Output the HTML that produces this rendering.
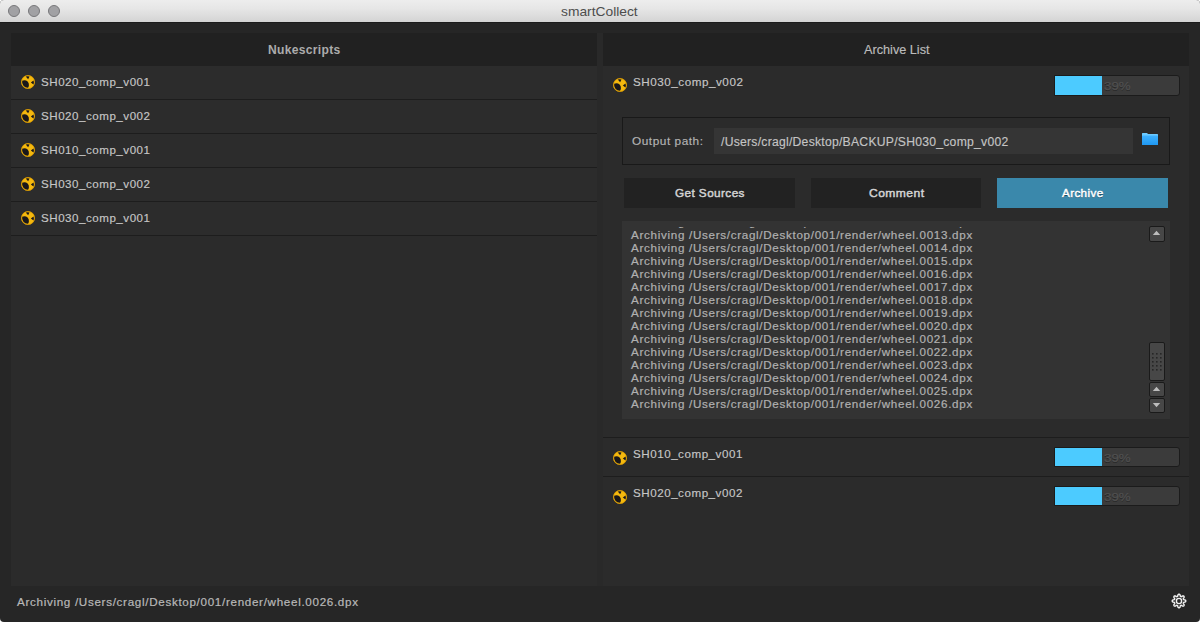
<!DOCTYPE html>
<html><head><meta charset="utf-8">
<style>
*{box-sizing:border-box;margin:0;padding:0}
html,body{width:1200px;height:622px;overflow:hidden;background:#ffffff;font-family:"Liberation Sans",sans-serif}
#win{position:absolute;left:0;top:0;width:1200px;height:622px;background:#262626;border-radius:4px;overflow:hidden}
#title{position:absolute;left:0;top:0;width:1200px;height:23px;background:linear-gradient(#ededed,#e6e6e6 40%,#d4d4d4);border-bottom:1px solid #1c1c1c}
.dot{position:absolute;top:5px;width:12px;height:12px;border-radius:50%;background:#a1a1a4;border:1px solid #77777a}
.tx{position:absolute;white-space:pre;transform-origin:0 0;-webkit-text-stroke-width:0.15px}
.blk{position:absolute}
.nk{position:absolute}
.pb{position:absolute;width:126px;height:20px;background:#3b3b3b;border:1px solid #1b1b1b;border-radius:0 3px 3px 0}
.pf{position:absolute;left:0;top:0;width:47px;height:18px;background:#4ccbff}
.sbtn{position:absolute;left:1149px;width:16px;height:16px;background:#474747;border:1px solid #1a1a1a;border-radius:2px}
</style></head><body>
<div id="win">

<div id="title"><div class="dot" style="left:8px"></div><div class="dot" style="left:28px"></div><div class="dot" style="left:48px"></div></div>
<div class="tx" id="ttl" style="left:561.25px;top:4.80px;font-size:13px;line-height:13px;color:#4d4d4d;transform:scaleX(1.0617);-webkit-text-stroke-width:0;">smartCollect</div>
<div class="blk" style="left:597px;top:33px;width:6px;height:553px;background:#292929"></div>
<div class="blk" style="left:11px;top:33px;width:586px;height:553px;background:#2b2b2b"></div>
<div class="blk" style="left:11px;top:33px;width:586px;height:33px;background:#212121"></div>
<div class="tx" id="nks" style="left:267.80px;top:43.84px;font-size:12px;line-height:12px;color:#acacac;font-weight:bold;-webkit-text-stroke-width:0;transform:scaleX(1.0070);letter-spacing:0.3px;">Nukescripts</div>
<div class="blk" style="left:11px;top:66px;width:586px;height:34px;background:#2c2c2c;border-bottom:1px solid #1d1d1d"></div>
<svg class="nk" style="left:20px;top:74.2px" width="16" height="16" viewBox="0 0 16 16"><circle cx="8" cy="8" r="6.6" fill="#f4b80e" stroke="#dc9c00" stroke-width="0.8"/><path d="M2.2 6.8 A5.75 5.75 0 0 0 8.1 13.8 Q9.3 12.0 8.8 9.7 Q8.3 7.4 6.1 6.6 Q4.0 6.0 2.2 6.8 Z" fill="#19171a"/><path d="M5.8 2.6 Q7.6 1.9 9.5 2.6 L8.1 5.2 Z" fill="#19171a"/><path d="M13.5 6.6 Q14.3 8.5 13.5 10.4 L10.8 8.5 Z" fill="#19171a"/></svg>
<div class="tx" id="l0" style="left:41.00px;top:77.39px;font-size:11px;line-height:11px;color:#c6c6c6;transform:scaleX(1.0519);letter-spacing:0.5px;">SH020_comp_v001</div>
<div class="blk" style="left:11px;top:100px;width:586px;height:34px;background:#2c2c2c;border-bottom:1px solid #1d1d1d"></div>
<svg class="nk" style="left:20px;top:108.2px" width="16" height="16" viewBox="0 0 16 16"><circle cx="8" cy="8" r="6.6" fill="#f4b80e" stroke="#dc9c00" stroke-width="0.8"/><path d="M2.2 6.8 A5.75 5.75 0 0 0 8.1 13.8 Q9.3 12.0 8.8 9.7 Q8.3 7.4 6.1 6.6 Q4.0 6.0 2.2 6.8 Z" fill="#19171a"/><path d="M5.8 2.6 Q7.6 1.9 9.5 2.6 L8.1 5.2 Z" fill="#19171a"/><path d="M13.5 6.6 Q14.3 8.5 13.5 10.4 L10.8 8.5 Z" fill="#19171a"/></svg>
<div class="tx" id="l1" style="left:41.00px;top:111.39px;font-size:11px;line-height:11px;color:#c6c6c6;transform:scaleX(1.0519);letter-spacing:0.5px;">SH020_comp_v002</div>
<div class="blk" style="left:11px;top:134px;width:586px;height:34px;background:#2c2c2c;border-bottom:1px solid #1d1d1d"></div>
<svg class="nk" style="left:20px;top:142.2px" width="16" height="16" viewBox="0 0 16 16"><circle cx="8" cy="8" r="6.6" fill="#f4b80e" stroke="#dc9c00" stroke-width="0.8"/><path d="M2.2 6.8 A5.75 5.75 0 0 0 8.1 13.8 Q9.3 12.0 8.8 9.7 Q8.3 7.4 6.1 6.6 Q4.0 6.0 2.2 6.8 Z" fill="#19171a"/><path d="M5.8 2.6 Q7.6 1.9 9.5 2.6 L8.1 5.2 Z" fill="#19171a"/><path d="M13.5 6.6 Q14.3 8.5 13.5 10.4 L10.8 8.5 Z" fill="#19171a"/></svg>
<div class="tx" id="l2" style="left:41.00px;top:145.39px;font-size:11px;line-height:11px;color:#c6c6c6;transform:scaleX(1.0519);letter-spacing:0.5px;">SH010_comp_v001</div>
<div class="blk" style="left:11px;top:168px;width:586px;height:34px;background:#2c2c2c;border-bottom:1px solid #1d1d1d"></div>
<svg class="nk" style="left:20px;top:176.2px" width="16" height="16" viewBox="0 0 16 16"><circle cx="8" cy="8" r="6.6" fill="#f4b80e" stroke="#dc9c00" stroke-width="0.8"/><path d="M2.2 6.8 A5.75 5.75 0 0 0 8.1 13.8 Q9.3 12.0 8.8 9.7 Q8.3 7.4 6.1 6.6 Q4.0 6.0 2.2 6.8 Z" fill="#19171a"/><path d="M5.8 2.6 Q7.6 1.9 9.5 2.6 L8.1 5.2 Z" fill="#19171a"/><path d="M13.5 6.6 Q14.3 8.5 13.5 10.4 L10.8 8.5 Z" fill="#19171a"/></svg>
<div class="tx" id="l3" style="left:41.00px;top:179.39px;font-size:11px;line-height:11px;color:#c6c6c6;transform:scaleX(1.0519);letter-spacing:0.5px;">SH030_comp_v002</div>
<div class="blk" style="left:11px;top:202px;width:586px;height:34px;background:#2c2c2c;border-bottom:1px solid #1d1d1d"></div>
<svg class="nk" style="left:20px;top:210.2px" width="16" height="16" viewBox="0 0 16 16"><circle cx="8" cy="8" r="6.6" fill="#f4b80e" stroke="#dc9c00" stroke-width="0.8"/><path d="M2.2 6.8 A5.75 5.75 0 0 0 8.1 13.8 Q9.3 12.0 8.8 9.7 Q8.3 7.4 6.1 6.6 Q4.0 6.0 2.2 6.8 Z" fill="#19171a"/><path d="M5.8 2.6 Q7.6 1.9 9.5 2.6 L8.1 5.2 Z" fill="#19171a"/><path d="M13.5 6.6 Q14.3 8.5 13.5 10.4 L10.8 8.5 Z" fill="#19171a"/></svg>
<div class="tx" id="l4" style="left:41.00px;top:213.39px;font-size:11px;line-height:11px;color:#c6c6c6;transform:scaleX(1.0519);letter-spacing:0.5px;">SH030_comp_v001</div>
<div class="blk" style="left:603px;top:33px;width:586px;height:553px;background:#2b2b2b"></div>
<div class="blk" style="left:603px;top:33px;width:586px;height:33px;background:#212121"></div>
<div class="tx" id="al" style="left:863.50px;top:43.84px;font-size:12px;line-height:12px;color:#bcbcbc;transform:scaleX(1.0562);">Archive List</div>
<div class="blk" style="left:603px;top:66px;width:586px;height:372px;background:#2b2b2b;border-bottom:1px solid #1d1d1d"></div>
<svg class="nk" style="left:611.9px;top:77.3px" width="16" height="16" viewBox="0 0 16 16"><circle cx="8" cy="8" r="6.6" fill="#f4b80e" stroke="#dc9c00" stroke-width="0.8"/><path d="M2.2 6.8 A5.75 5.75 0 0 0 8.1 13.8 Q9.3 12.0 8.8 9.7 Q8.3 7.4 6.1 6.6 Q4.0 6.0 2.2 6.8 Z" fill="#19171a"/><path d="M5.8 2.6 Q7.6 1.9 9.5 2.6 L8.1 5.2 Z" fill="#19171a"/><path d="M13.5 6.6 Q14.3 8.5 13.5 10.4 L10.8 8.5 Z" fill="#19171a"/></svg>
<div class="tx" id="r0" style="left:632.70px;top:77.19px;font-size:11px;line-height:11px;color:#c6c6c6;transform:scaleX(1.0606);letter-spacing:0.5px;">SH030_comp_v002</div>
<div class="pb" style="left:1054px;top:75px;height:21px"><div class="pf" style="height:19px"></div></div><div class="tx" id="pct75" style="left:1103.70px;top:80.69px;font-size:11px;line-height:11px;color:#505050;transform:scaleX(1.2144);text-shadow:0 1px 0 #262626;-webkit-text-stroke-width:0.25px;">39%</div>
<div class="blk" style="left:622px;top:117px;width:548px;height:48px;border:1px solid #191919;background:#2b2b2b"></div>
<div class="tx" id="op" style="left:632.40px;top:135.89px;font-size:11px;line-height:11px;color:#b4b4b4;transform:scaleX(1.0750);letter-spacing:0.5px;">Output path:</div>
<div class="blk" style="left:714px;top:128px;width:419px;height:26px;background:#353535"></div>
<div class="tx" id="path" style="left:721.30px;top:135.59px;font-size:12px;line-height:12px;color:#c4c4c4;transform:scaleX(1.0138);letter-spacing:0.25px;">/Users/cragl/Desktop/BACKUP/SH030_comp_v002</div>
<svg class="blk" style="left:1141px;top:132px" width="18" height="14" viewBox="0 0 18 14"><defs><linearGradient id="fg" x1="0" y1="0" x2="0" y2="1"><stop offset="0" stop-color="#3fb2ff"/><stop offset="1" stop-color="#1f98f2"/></linearGradient></defs><path d="M1 1.6 Q1 0.9 1.6 0.9 L5.8 0.9 L7.2 2.1 L16.4 2.1 Q17 2.1 17 2.7 L17 4 L1 4 Z" fill="#6ccaff"/><rect x="1" y="3.4" width="16" height="9.7" rx="0.6" fill="url(#fg)"/></svg>
<div class="blk" style="left:624px;top:178px;width:171px;height:30px;background:#222222"></div>
<div class="blk" style="left:811px;top:178px;width:170px;height:30px;background:#222222"></div>
<div class="blk" style="left:997px;top:178px;width:171px;height:30px;background:#3a88ab"></div>
<div class="tx" id="gs" style="left:674.60px;top:187.57px;font-size:11.5px;line-height:11.5px;color:#d4d4d4;transform:scaleX(1.0233);letter-spacing:0.4px;-webkit-text-stroke-width:0.45px;">Get Sources</div>
<div class="tx" id="cm" style="left:869.00px;top:187.77px;font-size:11.5px;line-height:11.5px;color:#d4d4d4;transform:scaleX(1.0526);letter-spacing:0.4px;-webkit-text-stroke-width:0.45px;">Comment</div>
<div class="tx" id="ar" style="left:1062.00px;top:188.17px;font-size:11.5px;line-height:11.5px;color:#ffffff;transform:scaleX(1.0085);letter-spacing:0.4px;-webkit-text-stroke-width:0.45px;text-shadow:0 1px 0 #1d4a60;">Archive</div>
<div class="blk" style="left:622px;top:221px;width:548px;height:198px;background:#333333"></div>
<div class="blk" style="left:622px;top:227px;width:520px;height:192px;overflow:hidden">
<div class="tx" id="log12" style="left:9.25px;top:-9.71px;font-size:11px;line-height:11px;color:#b0b0b0;transform:scaleX(1.0581);letter-spacing:0.65px;-webkit-text-stroke-width:0.2px;">Archiving /Users/cragl/Desktop/001/render/wheel.0012.dpx</div>
<div class="tx" id="log13" style="left:9.25px;top:3.29px;font-size:11px;line-height:11px;color:#b0b0b0;transform:scaleX(1.0581);letter-spacing:0.65px;-webkit-text-stroke-width:0.2px;">Archiving /Users/cragl/Desktop/001/render/wheel.0013.dpx</div>
<div class="tx" id="log14" style="left:9.25px;top:16.29px;font-size:11px;line-height:11px;color:#b0b0b0;transform:scaleX(1.0581);letter-spacing:0.65px;-webkit-text-stroke-width:0.2px;">Archiving /Users/cragl/Desktop/001/render/wheel.0014.dpx</div>
<div class="tx" id="log15" style="left:9.25px;top:29.29px;font-size:11px;line-height:11px;color:#b0b0b0;transform:scaleX(1.0581);letter-spacing:0.65px;-webkit-text-stroke-width:0.2px;">Archiving /Users/cragl/Desktop/001/render/wheel.0015.dpx</div>
<div class="tx" id="log16" style="left:9.25px;top:42.29px;font-size:11px;line-height:11px;color:#b0b0b0;transform:scaleX(1.0581);letter-spacing:0.65px;-webkit-text-stroke-width:0.2px;">Archiving /Users/cragl/Desktop/001/render/wheel.0016.dpx</div>
<div class="tx" id="log17" style="left:9.25px;top:55.29px;font-size:11px;line-height:11px;color:#b0b0b0;transform:scaleX(1.0581);letter-spacing:0.65px;-webkit-text-stroke-width:0.2px;">Archiving /Users/cragl/Desktop/001/render/wheel.0017.dpx</div>
<div class="tx" id="log18" style="left:9.25px;top:68.29px;font-size:11px;line-height:11px;color:#b0b0b0;transform:scaleX(1.0581);letter-spacing:0.65px;-webkit-text-stroke-width:0.2px;">Archiving /Users/cragl/Desktop/001/render/wheel.0018.dpx</div>
<div class="tx" id="log19" style="left:9.25px;top:81.29px;font-size:11px;line-height:11px;color:#b0b0b0;transform:scaleX(1.0581);letter-spacing:0.65px;-webkit-text-stroke-width:0.2px;">Archiving /Users/cragl/Desktop/001/render/wheel.0019.dpx</div>
<div class="tx" id="log20" style="left:9.25px;top:94.29px;font-size:11px;line-height:11px;color:#b0b0b0;transform:scaleX(1.0581);letter-spacing:0.65px;-webkit-text-stroke-width:0.2px;">Archiving /Users/cragl/Desktop/001/render/wheel.0020.dpx</div>
<div class="tx" id="log21" style="left:9.25px;top:107.29px;font-size:11px;line-height:11px;color:#b0b0b0;transform:scaleX(1.0581);letter-spacing:0.65px;-webkit-text-stroke-width:0.2px;">Archiving /Users/cragl/Desktop/001/render/wheel.0021.dpx</div>
<div class="tx" id="log22" style="left:9.25px;top:120.29px;font-size:11px;line-height:11px;color:#b0b0b0;transform:scaleX(1.0581);letter-spacing:0.65px;-webkit-text-stroke-width:0.2px;">Archiving /Users/cragl/Desktop/001/render/wheel.0022.dpx</div>
<div class="tx" id="log23" style="left:9.25px;top:133.29px;font-size:11px;line-height:11px;color:#b0b0b0;transform:scaleX(1.0581);letter-spacing:0.65px;-webkit-text-stroke-width:0.2px;">Archiving /Users/cragl/Desktop/001/render/wheel.0023.dpx</div>
<div class="tx" id="log24" style="left:9.25px;top:146.29px;font-size:11px;line-height:11px;color:#b0b0b0;transform:scaleX(1.0581);letter-spacing:0.65px;-webkit-text-stroke-width:0.2px;">Archiving /Users/cragl/Desktop/001/render/wheel.0024.dpx</div>
<div class="tx" id="log25" style="left:9.25px;top:159.29px;font-size:11px;line-height:11px;color:#b0b0b0;transform:scaleX(1.0581);letter-spacing:0.65px;-webkit-text-stroke-width:0.2px;">Archiving /Users/cragl/Desktop/001/render/wheel.0025.dpx</div>
<div class="tx" id="log26" style="left:9.25px;top:172.29px;font-size:11px;line-height:11px;color:#b0b0b0;transform:scaleX(1.0581);letter-spacing:0.65px;-webkit-text-stroke-width:0.2px;">Archiving /Users/cragl/Desktop/001/render/wheel.0026.dpx</div>
</div>
<div class="sbtn" style="top:226px"></div>
<svg class="blk" style="left:1152px;top:230px" width="9" height="6" viewBox="0 0 9 6"><path d="M0.8 5 L4.5 0.8 L8.2 5 Z" fill="#bdbdbd"/></svg>
<div class="sbtn" style="top:342px;height:39px"></div>
<svg class="blk" style="left:1152.2px;top:353.2px" width="10" height="18"><rect x="0" y="0" width="1.6" height="1.6" fill="#262626"/><rect x="0" y="4" width="1.6" height="1.6" fill="#262626"/><rect x="0" y="8" width="1.6" height="1.6" fill="#262626"/><rect x="0" y="12" width="1.6" height="1.6" fill="#262626"/><rect x="0" y="16" width="1.6" height="1.6" fill="#262626"/><rect x="4" y="0" width="1.6" height="1.6" fill="#262626"/><rect x="4" y="4" width="1.6" height="1.6" fill="#262626"/><rect x="4" y="8" width="1.6" height="1.6" fill="#262626"/><rect x="4" y="12" width="1.6" height="1.6" fill="#262626"/><rect x="4" y="16" width="1.6" height="1.6" fill="#262626"/><rect x="8" y="0" width="1.6" height="1.6" fill="#262626"/><rect x="8" y="4" width="1.6" height="1.6" fill="#262626"/><rect x="8" y="8" width="1.6" height="1.6" fill="#262626"/><rect x="8" y="12" width="1.6" height="1.6" fill="#262626"/><rect x="8" y="16" width="1.6" height="1.6" fill="#262626"/></svg>
<div class="sbtn" style="top:382px;height:15px"></div>
<svg class="blk" style="left:1152px;top:386px" width="9" height="6" viewBox="0 0 9 6"><path d="M0.8 5 L4.5 0.8 L8.2 5 Z" fill="#bdbdbd"/></svg>
<div class="sbtn" style="top:398px;height:15px"></div>
<svg class="blk" style="left:1152px;top:402px" width="9" height="6" viewBox="0 0 9 6"><path d="M0.8 1 L4.5 5.2 L8.2 1 Z" fill="#bdbdbd"/></svg>
<div class="blk" style="left:603px;top:438px;width:586px;height:39px;background:#2b2b2b;border-bottom:1px solid #1d1d1d"></div>
<svg class="nk" style="left:611.95px;top:449.6px" width="16" height="16" viewBox="0 0 16 16"><circle cx="8" cy="8" r="6.6" fill="#f4b80e" stroke="#dc9c00" stroke-width="0.8"/><path d="M2.2 6.8 A5.75 5.75 0 0 0 8.1 13.8 Q9.3 12.0 8.8 9.7 Q8.3 7.4 6.1 6.6 Q4.0 6.0 2.2 6.8 Z" fill="#19171a"/><path d="M5.8 2.6 Q7.6 1.9 9.5 2.6 L8.1 5.2 Z" fill="#19171a"/><path d="M13.5 6.6 Q14.3 8.5 13.5 10.4 L10.8 8.5 Z" fill="#19171a"/></svg>
<div class="tx" id="r1" style="left:632.90px;top:449.29px;font-size:11px;line-height:11px;color:#c6c6c6;transform:scaleX(1.0553);letter-spacing:0.5px;">SH010_comp_v001</div>
<div class="pb" style="left:1054px;top:447px;height:20px"><div class="pf" style="height:18px"></div></div><div class="tx" id="pct447" style="left:1103.70px;top:452.69px;font-size:11px;line-height:11px;color:#505050;transform:scaleX(1.2144);text-shadow:0 1px 0 #262626;-webkit-text-stroke-width:0.25px;">39%</div>
<div class="blk" style="left:603px;top:477px;width:586px;height:39px;background:#2b2b2b;"></div>
<svg class="nk" style="left:611.95px;top:488.6px" width="16" height="16" viewBox="0 0 16 16"><circle cx="8" cy="8" r="6.6" fill="#f4b80e" stroke="#dc9c00" stroke-width="0.8"/><path d="M2.2 6.8 A5.75 5.75 0 0 0 8.1 13.8 Q9.3 12.0 8.8 9.7 Q8.3 7.4 6.1 6.6 Q4.0 6.0 2.2 6.8 Z" fill="#19171a"/><path d="M5.8 2.6 Q7.6 1.9 9.5 2.6 L8.1 5.2 Z" fill="#19171a"/><path d="M13.5 6.6 Q14.3 8.5 13.5 10.4 L10.8 8.5 Z" fill="#19171a"/></svg>
<div class="tx" id="r2" style="left:632.90px;top:488.29px;font-size:11px;line-height:11px;color:#c6c6c6;transform:scaleX(1.0553);letter-spacing:0.5px;">SH020_comp_v002</div>
<div class="pb" style="left:1054px;top:486px;height:20px"><div class="pf" style="height:18px"></div></div><div class="tx" id="pct486" style="left:1103.70px;top:491.69px;font-size:11px;line-height:11px;color:#505050;transform:scaleX(1.2144);text-shadow:0 1px 0 #262626;-webkit-text-stroke-width:0.25px;">39%</div>
<div class="tx" id="st" style="left:17.00px;top:596.59px;font-size:11px;line-height:11px;color:#b8b8b8;transform:scaleX(1.0573);letter-spacing:0.65px;-webkit-text-stroke-width:0.2px;">Archiving /Users/cragl/Desktop/001/render/wheel.0026.dpx</div>
<svg class="blk" style="left:1168.9px;top:590.8px" width="20" height="20" viewBox="0 0 20 20"><path d="M10.00 3.20 L10.27 3.24 L10.52 3.35 L10.77 3.53 L10.98 3.81 L11.12 4.36 L11.22 4.91 L11.35 5.20 L11.49 5.41 L11.64 5.56 L11.80 5.66 L11.98 5.70 L12.19 5.70 L12.44 5.65 L12.73 5.54 L13.19 5.22 L13.68 4.93 L14.03 4.88 L14.33 4.92 L14.59 5.03 L14.81 5.19 L14.97 5.41 L15.08 5.67 L15.12 5.97 L15.07 6.32 L14.78 6.81 L14.46 7.27 L14.35 7.56 L14.30 7.81 L14.30 8.02 L14.34 8.20 L14.44 8.36 L14.59 8.51 L14.80 8.65 L15.09 8.78 L15.64 8.88 L16.19 9.02 L16.47 9.23 L16.65 9.48 L16.76 9.73 L16.80 10.00 L16.76 10.27 L16.65 10.52 L16.47 10.77 L16.19 10.98 L15.64 11.12 L15.09 11.22 L14.80 11.35 L14.59 11.49 L14.44 11.64 L14.34 11.80 L14.30 11.98 L14.30 12.19 L14.35 12.44 L14.46 12.73 L14.78 13.19 L15.07 13.68 L15.12 14.03 L15.08 14.33 L14.97 14.59 L14.81 14.81 L14.59 14.97 L14.33 15.08 L14.03 15.12 L13.68 15.07 L13.19 14.78 L12.73 14.46 L12.44 14.35 L12.19 14.30 L11.98 14.30 L11.80 14.34 L11.64 14.44 L11.49 14.59 L11.35 14.80 L11.22 15.09 L11.12 15.64 L10.98 16.19 L10.77 16.47 L10.52 16.65 L10.27 16.76 L10.00 16.80 L9.73 16.76 L9.48 16.65 L9.23 16.47 L9.02 16.19 L8.88 15.64 L8.78 15.09 L8.65 14.80 L8.51 14.59 L8.36 14.44 L8.20 14.34 L8.02 14.30 L7.81 14.30 L7.56 14.35 L7.27 14.46 L6.81 14.78 L6.32 15.07 L5.97 15.12 L5.67 15.08 L5.41 14.97 L5.19 14.81 L5.03 14.59 L4.92 14.33 L4.88 14.03 L4.93 13.68 L5.22 13.19 L5.54 12.73 L5.65 12.44 L5.70 12.19 L5.70 11.98 L5.66 11.80 L5.56 11.64 L5.41 11.49 L5.20 11.35 L4.91 11.22 L4.36 11.12 L3.81 10.98 L3.53 10.77 L3.35 10.52 L3.24 10.27 L3.20 10.00 L3.24 9.73 L3.35 9.48 L3.53 9.23 L3.81 9.02 L4.36 8.88 L4.91 8.78 L5.20 8.65 L5.41 8.51 L5.56 8.36 L5.66 8.20 L5.70 8.02 L5.70 7.81 L5.65 7.56 L5.54 7.27 L5.22 6.81 L4.93 6.32 L4.88 5.97 L4.92 5.67 L5.03 5.41 L5.19 5.19 L5.41 5.03 L5.67 4.92 L5.97 4.88 L6.32 4.93 L6.81 5.22 L7.27 5.54 L7.56 5.65 L7.81 5.70 L8.02 5.70 L8.20 5.66 L8.36 5.56 L8.51 5.41 L8.65 5.20 L8.78 4.91 L8.88 4.36 L9.02 3.81 L9.23 3.53 L9.48 3.35 L9.73 3.24 Z" fill="none" stroke="#f0f0f0" stroke-width="1.45" stroke-linejoin="round"/><circle cx="10" cy="10" r="2.6" fill="none" stroke="#f0f0f0" stroke-width="1.4"/></svg>
</div></body></html>
